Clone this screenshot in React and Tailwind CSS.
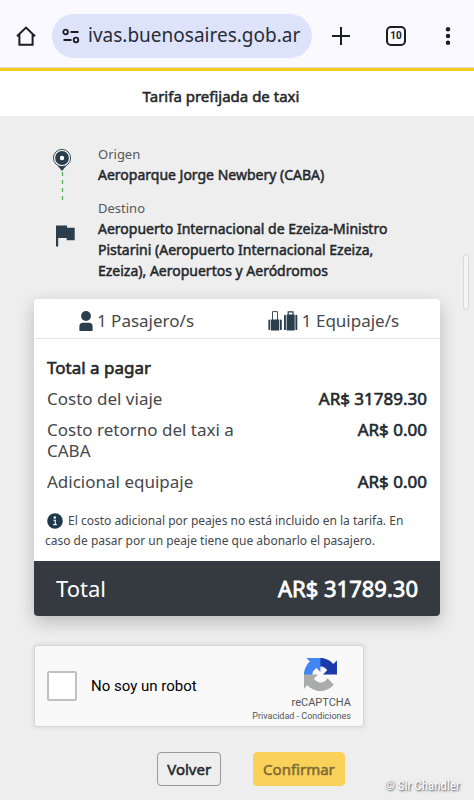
import { useState } from 'react'

const COSTS = [
  { label: 'Costo del viaje', amount: 'AR$ 31789.30' },
  { label: 'Costo retorno del taxi a CABA', amount: 'AR$ 0.00' },
  { label: 'Adicional equipaje', amount: 'AR$ 0.00' },
]

// regular weight thickened with a stroke, keeps the regular widths
const STRONG = 'font-normal text-[#23272b] [-webkit-text-stroke:0.035em_currentColor]'

function BrowserBar() {
  const [url, setUrl] = useState('ivas.buenosaires.gob.ar')
  return (
    <header className="flex items-center h-[68px] pt-1 pl-4 pr-4 bg-[#faf9ff] border-b border-[#dddde3] text-[#1c1d22]">
      <button aria-label="Inicio" className="shrink-0">
        <svg viewBox="0 0 20 20" className="w-5 h-5" fill="none" stroke="currentColor" strokeWidth="2">
          <path d="M1 10.2 10 1.6l9 8.6M3.4 8.4v10.4h13.2V8.4" />
        </svg>
      </button>
      <div className="flex items-center flex-1 min-w-0 h-11 ml-4 pl-2.5 pr-1 rounded-full bg-[#dce3fb]">
        <svg viewBox="0 0 18 16" className="w-[18px] h-4 shrink-0" fill="none" stroke="currentColor" strokeWidth="1.8">
          <circle cx="3.6" cy="4" r="2.3" />
          <path d="M8.5 4h8M1.5 12h8" />
          <circle cx="14" cy="12" r="2.3" />
        </svg>
        <input aria-label="Dirección" value={url} onChange={e => setUrl(e.target.value)}
          className="flex-1 min-w-0 ml-2 bg-transparent outline-none text-[19px] font-['Noto_Sans',sans-serif] text-[#2a2c38]" />
      </div>
      <button aria-label="Nueva pestaña" className="shrink-0 ml-5">
        <svg viewBox="0 0 18 18" className="w-[18px] h-[18px]" stroke="currentColor" strokeWidth="2">
          <path d="M9 0v18M0 9h18" />
        </svg>
      </button>
      <button aria-label="Pestañas"
        className="shrink-0 flex items-center justify-center w-5 h-5 ml-9 rounded-[5px] border-2 border-current text-[10px] font-bold font-[Roboto,sans-serif]">
        10
      </button>
      <button aria-label="Menú" className="shrink-0 ml-8">
        <svg viewBox="0 0 20 18" className="w-5 h-[18px]" fill="currentColor">
          <circle cx="10" cy="2.3" r="2.2" />
          <circle cx="10" cy="9" r="2.2" />
          <circle cx="10" cy="15.7" r="2.2" />
        </svg>
      </button>
    </header>
  )
}

function PinIcon() {
  return (
    <svg viewBox="0 0 20 52" className="w-5 h-[52px]">
      <path d="M10 23 5.5 17.5h9z" fill="#2b3e4d" />
      <circle cx="10" cy="10" r="8.6" fill="#f4f6f7" stroke="#2b3e4d" strokeWidth="0.9" />
      <circle cx="10" cy="10" r="6.9" fill="#2b3e4d" />
      <circle cx="10" cy="10" r="2.2" fill="#fff" />
      <path d="M10.5 24v28" stroke="#4fb257" strokeWidth="1.3" strokeDasharray="4 4" />
    </svg>
  )
}

function FlagIcon() {
  return (
    <svg viewBox="0 0 20 22" className="w-5 h-[22px]" fill="#2b3e4d">
      <path d="M0 0.5h11v2.3H18.7v12.4h-8V13H2.2v8.5H0z" />
    </svg>
  )
}

function PersonIcon() {
  return (
    <svg viewBox="0 0 14 20" className="w-3.5 h-5" fill="#2b3e4d">
      <circle cx="7" cy="5" r="4.9" />
      <path d="M0.4 20v-4.6Q0.4 11.8 4 11.8h6q3.6 0 3.6 3.6V20z" />
    </svg>
  )
}

function LuggageIcon() {
  return (
    <svg viewBox="0 0 30 20" className="w-[30px] h-5" fill="#2b3e4d">
      <path d="M4.5 9V0.6h5V9" fill="none" stroke="#2b3e4d" strokeWidth="0.9" />
      <rect x="3" y="8.5" width="8.2" height="11" />
      <rect x="0.4" y="8.5" width="1.9" height="10.6" rx="0.9" />
      <rect x="11.9" y="8.5" width="1.9" height="10.6" rx="0.9" />
      <path d="M20.2 4V0.8h4.8V4" fill="none" stroke="#2b3e4d" strokeWidth="1.2" />
      <rect x="18.6" y="3.5" width="8.1" height="16" />
      <rect x="16" y="3.8" width="1.9" height="15.3" rx="0.9" />
      <rect x="27.4" y="3.8" width="1.9" height="15.3" rx="0.9" />
    </svg>
  )
}

function InfoIcon() {
  return (
    <svg viewBox="0 0 16 16" className="inline-block w-4 h-4 mr-0.5 ml-0.5 align-[-4px]">
      <circle cx="8" cy="8" r="7.8" fill="#20394a" />
      <circle cx="7.8" cy="4.5" r="1.2" fill="#fff" />
      <path d="M6.4 7.2h1.9v4.2M6.2 11.6h3.6" fill="none" stroke="#fff" strokeWidth="1.1" />
    </svg>
  )
}

function RecaptchaLogo() {
  return (
    <svg viewBox="0 0 64 64" className="w-[33px] h-[33px]">
      <path fill="#1C3AA9" d="M64 31.955l-.033-1.37V4.687l-7.16 7.16C50.948 4.674 42.033.093 32.05.093c-10.39 0-19.622 4.96-25.458 12.64l11.736 11.86a15.55 15.55 0 0 1 4.754-5.334c2.05-1.6 4.952-2.906 8.968-2.906.485 0 .86.057 1.135.163 4.976.393 9.288 3.14 11.828 7.124l-8.307 8.307L64 31.953" />
      <path fill="#4285F4" d="M31.862.094l-1.37.033H4.594l7.16 7.16C4.58 13.147 0 22.06 0 32.046c0 10.39 4.96 19.622 12.64 25.458L24.5 45.768a15.55 15.55 0 0 1-5.334-4.754c-1.6-2.05-2.906-4.952-2.906-8.968 0-.485.057-.86.163-1.135.393-4.976 3.14-9.288 7.124-11.828l8.307 8.307L31.86.095" />
      <path fill="#ABABAB" d="M.001 32.045l.033 1.37v25.898l7.16-7.16c5.86 7.173 14.774 11.754 24.76 11.754 10.39 0 19.622-4.96 25.458-12.64l-11.736-11.86a15.55 15.55 0 0 1-4.754 5.334c-2.05 1.6-4.952 2.906-8.968 2.906-.485 0-.86-.057-1.135-.163-4.976-.393-9.288-3.14-11.828-7.124l8.307-8.307c-10.522.04-22.4.066-27.295-.005" />
    </svg>
  )
}

function Route() {
  return (
    <section className="flex gap-[26px] pl-[18px] text-[14px] leading-[21px]">
      <div className="shrink-0 flex flex-col items-start w-5 pt-1">
        <PinIcon />
        <div className="mt-[25px] ml-1"><FlagIcon /></div>
      </div>
      <dl className="flex-1 min-w-0 pr-10">
        <dt className="text-[13px] leading-5 text-[#55585b]">Origen</dt>
        <dd className={STRONG}>Aeroparque Jorge Newbery (CABA)</dd>
        <dt className="mt-[13px] text-[13px] leading-5 text-[#55585b]">Destino</dt>
        <dd className={STRONG}>
          Aeropuerto Internacional de Ezeiza-Ministro Pistarini (Aeropuerto Internacional Ezeiza, Ezeiza), Aeropuertos y Aeródromos
        </dd>
      </dl>
    </section>
  )
}

function FareCard() {
  return (
    <section className="mt-[18px] rounded bg-white shadow-[0_6px_18px_rgba(0,0,0,0.22)] text-[17px] leading-[21px] text-[#45484b]">
      <div className="flex h-10 pl-1 border-b border-[#e3e5e7]">
        <p className="flex flex-1 items-center justify-center gap-1 pt-1"><PersonIcon />1 Pasajero/s</p>
        <p className="flex flex-1 items-center justify-center gap-1 pt-1 pr-2"><LuggageIcon />1 Equipaje/s</p>
      </div>
      <div className="px-[13px] pt-[18px]">
        <h2 className={STRONG}>Total a pagar</h2>
        <dl className="flex flex-col gap-2.5 mt-2.5">
          {COSTS.map(c => (
            <div key={c.label} className="flex justify-between">
              <dt className="w-52">{c.label}</dt>
              <dd className={`whitespace-nowrap ${STRONG}`}>{c.amount}</dd>
            </div>
          ))}
        </dl>
      </div>
      <p className="px-[11px] pt-[19px] pb-2.5 text-[12px] leading-5">
        <InfoIcon /> El costo adicional por peajes no está incluido en la tarifa. En caso de pasar por un peaje tiene que abonarlo el pasajero.
      </p>
      <div className="flex items-center justify-between h-[55px] px-[22px] rounded-b bg-[#343a40] text-[22px] text-white">
        <span>Total</span>
        <span className="[-webkit-text-stroke:0.035em_currentColor]">AR$ 31789.30</span>
      </div>
    </section>
  )
}

function Recaptcha() {
  const [checked, setChecked] = useState(false)
  return (
    <section className="flex items-center justify-between w-full max-w-[330px] h-[82px] mt-[29px] pl-3 pr-3 rounded-[3px] border border-[#d6d6d6] bg-[#f9f9f9] shadow-[0_0_4px_1px_rgba(0,0,0,0.08)] font-[Roboto,sans-serif]">
      <label className="flex items-center gap-3.5 text-[15px] text-black">
        <input type="checkbox" checked={checked} onChange={e => setChecked(e.target.checked)}
          className="appearance-none w-[30px] h-[30px] rounded-[2px] border-2 border-[#c1c1c1] bg-white checked:bg-[#4285f4]" />
        No soy un robot
      </label>
      <div className="flex flex-col items-end pt-2 text-[#555]">
        <div className="mr-3.5"><RecaptchaLogo /></div>
        <span className="mt-1 text-[11px] leading-[15px]">reCAPTCHA</span>
        <p className="text-[9px] leading-3">
          <a href="#privacidad">Privacidad</a> - <a href="#condiciones">Condiciones</a>
        </p>
      </div>
    </section>
  )
}

export default function App() {
  return (
    <div className="relative min-h-screen bg-[#eee] font-['Noto_Sans',sans-serif]">
      <BrowserBar />
      <div className="h-[3px] bg-[#f5cb16]" />
      <h1 className={`h-[45px] pr-8 bg-white text-center text-[15px] leading-[51px] ${STRONG}`}>Tarifa prefijada de taxi</h1>
      <main className="px-[34px] pt-7 pb-3.5">
        <Route />
        <FareCard />
        <Recaptcha />
        <div className="flex justify-center gap-8 mt-[25px] pl-7 text-[15px]">
          <button className={`h-[34px] px-[9px] rounded border border-[#999] ${STRONG}`}>Volver</button>
          <button className="h-[34px] px-[9px] rounded border border-[#fad25a] bg-[#fad25a] text-[#7e6c35] [-webkit-text-stroke:0.035em_currentColor]">
            Confirmar
          </button>
        </div>
      </main>
      <div className="absolute right-[5px] top-[254px] w-1.5 h-14 rounded-sm border border-[#d8d8d8] bg-[#f4f4f4]" />
      <p className="absolute right-3.5 bottom-1 text-[13px] leading-5 text-white font-['Roboto_Condensed',Roboto,sans-serif] [text-shadow:1px_1px_2px_#444]">
        © Sir Chandler
      </p>
    </div>
  )
}
